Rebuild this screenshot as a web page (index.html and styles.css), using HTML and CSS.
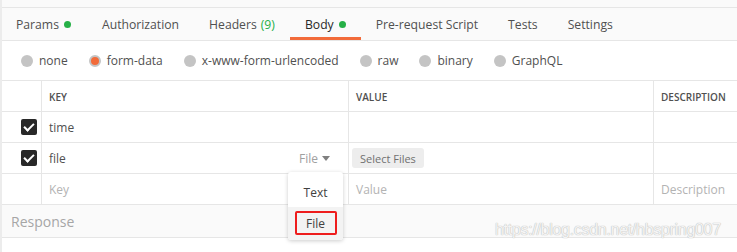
FILE: index.html
```html
<!DOCTYPE html>
<html lang="en">
<head>
    <meta charset="UTF-8">
    <title>Body - form-data</title>
    <link rel="stylesheet" href="styles.css">
</head>
<body>
    <div class="page">
        <div class="top-strip"></div>
        <div class="tabs">
            <div class="tab">Params <span class="dot"></span></div>
            <div class="tab">Authorization</div>
            <div class="tab">Headers <span class="count">(9)</span></div>
            <div class="tab active">Body <span class="dot"></span></div>
            <div class="tab">Pre-request Script</div>
            <div class="tab">Tests</div>
            <div class="tab">Settings</div>
        </div>

        <div class="modes">
            <label class="mode"><span class="radio"></span>none</label>
            <label class="mode"><span class="radio checked"></span>form-data</label>
            <label class="mode"><span class="radio"></span>x-www-form-urlencoded</label>
            <label class="mode"><span class="radio"></span>raw</label>
            <label class="mode"><span class="radio"></span>binary</label>
            <label class="mode"><span class="radio"></span>GraphQL</label>
        </div>

        <div class="grid">
            <div class="row head">
                <div class="cell check"></div>
                <div class="cell">KEY</div>
                <div class="cell">VALUE</div>
                <div class="cell">DESCRIPTION</div>
            </div>
            <div class="row">
                <div class="cell check"><span class="box"></span></div>
                <div class="cell">time</div>
                <div class="cell"></div>
                <div class="cell"></div>
            </div>
            <div class="row">
                <div class="cell check"><span class="box"></span></div>
                <div class="cell key-file">
                    <span>file</span>
                    <span class="type">File <span class="caret"></span></span>
                </div>
                <div class="cell"><button class="select-btn">Select Files</button></div>
                <div class="cell"></div>
            </div>
            <div class="row placeholder">
                <div class="cell check"></div>
                <div class="cell">Key</div>
                <div class="cell">Value</div>
                <div class="cell">Description</div>
            </div>
        </div>

        <div class="response">Response</div>

        <div class="menu">
            <div class="menu-item">Text</div>
            <div class="menu-item hover"><span class="mark">File</span></div>
        </div>

        <div class="watermark">https://blog.csdn.net/hbspring007</div>
    </div>
</body>
</html>
```

FILE: styles.css
```css
body {
    margin: 0;
    font-family: "Open Sans", "Liberation Sans", sans-serif;
    color: #505050;
    background-color: #fff;
}
.page {
    position: relative;
    width: 737px;
    height: 252px;
    overflow: hidden;
    border-left: 2px solid #ececec;
    box-sizing: border-box;
}
.top-strip {
    height: 7px;
    background-color: #fafafa;
    border-bottom: 1px solid #e6e6e6;
}
.tabs {
    display: flex;
    height: 32px;
    background-color: #fafafa;
    border-bottom: 1px solid #e6e6e6;
    font-size: 12.2px;
}
.tab {
    display: flex;
    align-items: center;
    gap: 5px;
    padding: 0 15px;
    color: #505050;
    border-bottom: 3px solid transparent;
    box-sizing: border-box;
    padding-top: 3px;
}
.tab:first-child {
    padding-left: 14px;
    padding-right: 16px;
}
.tab.active {
    color: #282828;
    border-bottom-color: #f26b3a;
}
.dot {
    width: 7px;
    height: 7px;
    border-radius: 50%;
    background-color: #26b047;
}
.count {
    color: #26b047;
    margin-left: -1px;
}
.modes {
    display: flex;
    align-items: center;
    height: 39px;
    padding-left: 19px;
    gap: 21px;
    font-size: 12px;
    border-bottom: 1px solid #e6e6e6;
}
.mode {
    display: flex;
    align-items: center;
    gap: 6px;
}
.radio {
    width: 12px;
    height: 12px;
    border-radius: 50%;
    background-color: #c4c4c4;
    box-sizing: border-box;
}
.radio.checked {
    background-color: #f26b3a;
    border: 2px solid #c4c4c4;
}
.row {
    display: grid;
    grid-template-columns: 39px 307px 305px 1fr;
    height: 30px;
    border-bottom: 1px solid #e6e6e6;
    font-size: 12px;
}
.cell {
    display: flex;
    align-items: center;
    padding: 0 7px;
    border-left: 1px solid #e6e6e6;
    color: #505050;
}
.cell.check {
    border-left: none;
    justify-content: flex-end;
    padding: 0 4px 0 0;
}
.head .cell {
    font-size: 10px;
    font-weight: 600;
    color: #505050;
    padding-top: 1px;
}
.placeholder .cell {
    color: #b3b3b3;
}
.box {
    position: relative;
    width: 16px;
    height: 16px;
    border-radius: 2px;
    background-color: #282828;
}
.box::after {
    content: "";
    position: absolute;
    left: 5px;
    top: 2px;
    width: 4px;
    height: 8px;
    border: solid #fff;
    border-width: 0 2px 2px 0;
    transform: rotate(45deg);
}
.key-file {
    justify-content: space-between;
}
.type {
    color: #a0a0a0;
    display: flex;
    align-items: center;
    gap: 4px;
    margin-right: 11px;
}
.caret {
    width: 0;
    height: 0;
    border-left: 4px solid transparent;
    border-right: 4px solid transparent;
    border-top: 5px solid #808080;
}
.select-btn {
    font-family: "Open Sans", "Liberation Sans", sans-serif;
    font-size: 11px;
    color: #707070;
    background-color: #ededed;
    border: none;
    border-radius: 3px;
    height: 20px;
    padding: 0 8px;
    margin-left: -4px;
}
.response {
    height: 32px;
    display: flex;
    align-items: center;
    padding-left: 9px;
    background-color: #fafafa;
    border-bottom: 1px solid #e6e6e6;
    font-size: 14px;
    color: #a6a6a6;
}
.menu {
    position: absolute;
    left: 286px;
    top: 172px;
    width: 55px;
    padding-top: 5px;
    background-color: #fff;
    border-radius: 3px;
    box-shadow: 0 1px 4px rgba(0, 0, 0, 0.2);
    font-size: 12px;
    color: #404040;
}
.menu-item {
    height: 30px;
    display: flex;
    align-items: center;
    justify-content: center;
}
.menu-item.hover {
    background-color: #f3f3f3;
    height: 33px;
    border-radius: 0 0 3px 3px;
}
.mark {
    border: 2px solid #ee1c1c;
    border-radius: 2px;
    width: 38px;
    height: 20px;
    display: flex;
    align-items: center;
    justify-content: center;
    margin-top: -1px;
}
.watermark {
    position: absolute;
    left: 493px;
    top: 221px;
    font-family: "Liberation Sans", Arial, sans-serif;
    font-size: 16px;
    color: #f4f4f4;
    text-shadow: 0 0 1px #b8b8b8, 0 0 1px #c8c8c8;
    letter-spacing: -0.3px;
}
```
